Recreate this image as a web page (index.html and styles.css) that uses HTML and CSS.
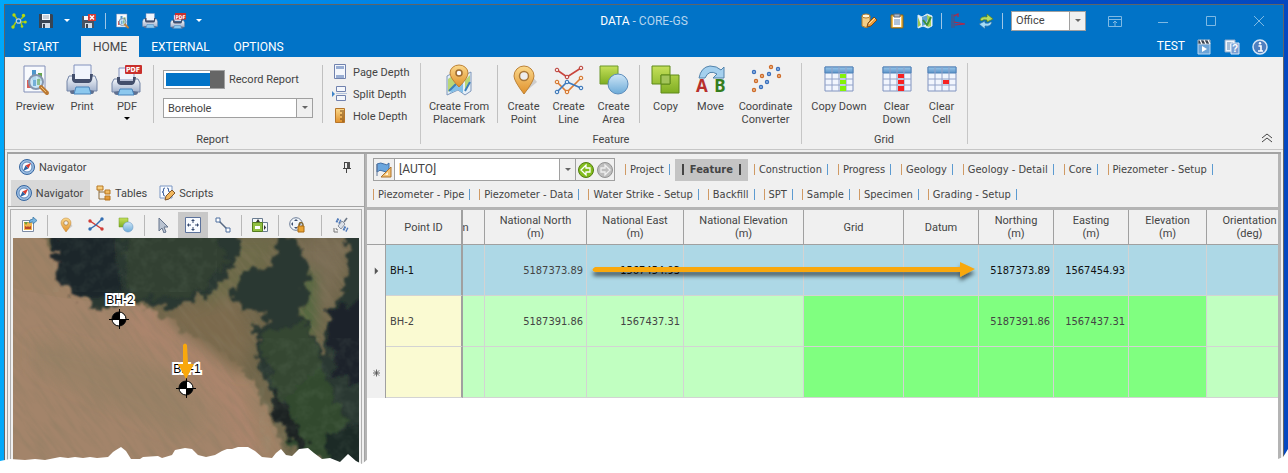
FILE: index.html
```html
<!DOCTYPE html>
<html lang="en">
<head>
<meta charset="utf-8">
<title>DATA - CORE-GS</title>
<link rel="stylesheet" href="styles.css">
</head>
<body>
<svg class="sprite" aria-hidden="true">
  <defs>
    <linearGradient id="gGold" x1="0" y1="0" x2="0" y2="1"><stop offset="0" stop-color="#fbd98c"/><stop offset="1" stop-color="#e0902a"/></linearGradient>
    <linearGradient id="gGreen" x1="0" y1="0" x2="0" y2="1"><stop offset="0" stop-color="#c5e05a"/><stop offset="1" stop-color="#7fae22"/></linearGradient>
    <linearGradient id="gBlue" x1="0" y1="0" x2="0" y2="1"><stop offset="0" stop-color="#cfe6f7"/><stop offset="1" stop-color="#6cabd8"/></linearGradient>
    <linearGradient id="gSteel" x1="0" y1="0" x2="0" y2="1"><stop offset="0" stop-color="#f4f7fb"/><stop offset="1" stop-color="#a3b2cc"/></linearGradient>
    <linearGradient id="gHead" x1="0" y1="0" x2="0" y2="1"><stop offset="0" stop-color="#9cc8ea"/><stop offset="1" stop-color="#5c93c8"/></linearGradient>
    <filter id="ragged" x="-20%" y="-20%" width="140%" height="140%"><feTurbulence type="fractalNoise" baseFrequency=".09" numOctaves="3" seed="4"/><feDisplacementMap in="SourceGraphic" scale="20" xChannelSelector="R" yChannelSelector="G"/><feGaussianBlur stdDeviation="1.2"/></filter>
    <filter id="streaks" x="0" y="0" width="100%" height="100%"><feTurbulence type="fractalNoise" baseFrequency=".03 .2" numOctaves="3" seed="8"/><feColorMatrix values="0 0 0 0 .25  0 0 0 0 .2  0 0 0 0 .12  1.8 0 0 0 -.7"/></filter>
    <filter id="leaves" x="0" y="0" width="100%" height="100%"><feTurbulence type="fractalNoise" baseFrequency=".08" numOctaves="3" seed="21"/><feColorMatrix values="0 0 0 0 .32  0 0 0 0 .42  0 0 0 0 .3  0 1.8 0 0 -.75"/></filter>
    <filter id="soft" x="-30%" y="-30%" width="160%" height="160%"><feGaussianBlur stdDeviation="7"/></filter>
    <filter id="drop" x="-20%" y="-60%" width="140%" height="260%"><feDropShadow dx="0" dy="4" stdDeviation="2" flood-opacity=".6"/></filter>
  </defs>

  <symbol id="preview" viewBox="0 0 32 32">
    <path d="M5 2h21v26H5z" fill="#f8fafd" stroke="#8390b8"/>
    <path d="M8 16h4v8H8z" fill="#d9605a"/><path d="M13 6h4v10h-4z" fill="#4e97cc"/><path d="M19 9h4v8h-4z" fill="#66a54e"/>
    <circle cx="17" cy="18" r="7" fill="#c3e2f5" fill-opacity=".85" stroke="#8595ad" stroke-width="2"/>
    <path d="M14 16h3v6h-3z" fill="#4e97cc" opacity=".7"/><path d="M18 15h3v6h-3z" fill="#66a54e" opacity=".6"/>
    <path d="M22 23l6 6" stroke="#bb7a35" stroke-width="4" stroke-linecap="round"/><path d="M22 23l5 5" stroke="#f0c070" stroke-width="1"/>
  </symbol>
  <symbol id="print" viewBox="0 0 32 32">
    <path d="M8 1h17v15H8z" fill="#f1f5fc" stroke="#8292bd"/>
    <path d="M3 12h4v4h18v-4h4l2 5v10H1V17z" fill="url(#gSteel)" stroke="#7384a6"/>
    <path d="M6 10h3v5h15v-5h3l-1 6q-1 3-3 3H9q-2 0-3-3z" fill="#434f6c"/>
    <path d="M4 27q0 3 2 3h2v-4z" fill="#60708f"/><path d="M28 27q0 3-2 3h-2v-4z" fill="#60708f"/>
    <path d="M10 23h13l2 7H8z" fill="#8cc8ee" stroke="#4782ba"/>
  </symbol>
  <symbol id="pdf" viewBox="0 0 32 32">
    <path d="M8 4h15v12H8z" fill="#f1f5fc" stroke="#8292bd"/>
    <path d="M3 15h4v3h16v-3h4l2 4v9H1v-9z" fill="url(#gSteel)" stroke="#7384a6"/>
    <path d="M6 13h3v4h13v-4h3l-1 5q-1 3-3 3H10q-3 0-4-3z" fill="#434f6c"/>
    <path d="M3 28q0 3 3 3h2v-4z" fill="#60708f"/><path d="M27 28q0 3-3 3h-2v-4z" fill="#60708f"/>
    <path d="M9 25h12l2 6H7z" fill="#8cc8ee" stroke="#4782ba"/>
  </symbol>
  <symbol id="disk" viewBox="0 0 16 16"><path d="M1 1h13l1 1v13H1z" fill="#394452"/><path d="M4 1h8v6H4z" fill="#f3f7fb"/><path d="M5 3h6M5 5h6" stroke="#9ba8b7"/><path d="M4 10h8v5H4z" fill="#d3dce6"/><path d="M5 11h2v4H5z" fill="#394452"/></symbol>
  <symbol id="diskx" viewBox="0 0 16 16"><path d="M1 3h12v12H1z" fill="#4a5361"/><path d="M3 3h5v4H3z" fill="#f3f7fb"/><path d="M4 10h7v5H4z" fill="#d3dce6"/><path d="M5 11h2v4H5z" fill="#394452"/><path d="M7 1h8v7H7z" fill="#d23b36"/><path d="M9 2.500l4 4m0-4l-4 4" stroke="#fff" stroke-width="1.500"/></symbol>
  <symbol id="logo" viewBox="0 0 16 16"><path d="M3 2l3 4M13 3l-3 3M2 14l3-5M14 9h-4M11 13l-1-3" stroke="#a2c617" stroke-width="1.500"/><circle cx="7.500" cy="8" r="2.200" fill="none" stroke="#b7cde4" stroke-width="1.300"/><g fill="#b5d80c"><circle cx="3" cy="2" r="1.700"/><circle cx="12.500" cy="2.500" r="1.700"/><circle cx="2" cy="14" r="1.700"/><circle cx="14.300" cy="9" r="1.500"/><circle cx="11" cy="13.500" r="1.300"/></g></symbol>
  <symbol id="dbedit" viewBox="0 0 16 16"><path d="M1 3v10q4 3 8 0V3z" fill="#f3cf87" stroke="#b27a27"/><ellipse cx="5" cy="3" rx="4" ry="2" fill="#fff5d9" stroke="#b27a27"/><path d="M6 14l1-4 6-6 3 3-6 6z" fill="#f1a03a" stroke="#74491d"/><path d="M8 11l6-6" stroke="#fce2a6"/></symbol>
  <symbol id="clip" viewBox="0 0 16 16"><path d="M2 2h12v13H2z" fill="#f3bf52" stroke="#90620e"/><path d="M4 4h8v10H4z" fill="#fff"/><path d="M5 1h6v3H5z" fill="#aebaca" stroke="#5d6b7d"/><path d="M5 7h6M5 9h6M5 11h6" stroke="#6288b4"/></symbol>
  <symbol id="map" viewBox="0 0 16 16"><path d="M1 2l4 2 5-3 5 2v10l-4 2-5-2-5 2z" fill="#e8f3fb" stroke="#dce9f4"/><path d="M5 4v9l3-1 3-6V2z" fill="#5da3d6"/><path d="M10 2l4 2v9l-3 1z" fill="#a5d055"/><path d="M1 4l3 8-3 2z" fill="#9dc64e"/><path d="M6 7l4 5 4-8" stroke="#3e8f3c" stroke-width="2" fill="none"/></symbol>
  <symbol id="depthlog" viewBox="0 0 16 16"><path d="M2 1v14M4 1v14" stroke="#5a4d79"/><path d="M1 3h3M1 6h3M1 9h3M1 12h3" stroke="#4a5b86"/><path d="M4 3l4-2v3M4 9l11 2-10 1" stroke="#bc2440" stroke-width="1.200" fill="none"/></symbol>
  <symbol id="refresh" viewBox="0 0 16 16"><path d="M2 7q1-4 7-3V1l6 5-6 3V7q-4-1-5 1z" fill="#b6dc63" stroke="#587f17" stroke-width=".7"/><path d="M14 9q-1 5-7 4v3l-6-5 6-3v2q4 1 5-1z" fill="#a5dcf7" stroke="#2b6ea2" stroke-width=".7"/></symbol>
  <symbol id="film" viewBox="0 0 16 16"><path d="M2 5h12v10H2z" fill="#6ba4d8" stroke="#b9d6f0"/><path d="M2 1h12v4H2z" fill="#39424f" stroke="#a6b8c9"/><path d="M4 1l2 4M8 1l2 4M12 1l2 4" stroke="#fff" stroke-width="1.200"/><path d="M6 7l5 3-5 3z" fill="#fff"/></symbol>
  <symbol id="help" viewBox="0 0 16 16"><path d="M1 1h10v12H1z" fill="#eff5fc" stroke="#8ca9c9"/><path d="M3 4h6M3 6h3M3 8h3M3 10h3" stroke="#5b84b2"/><path d="M7 4h8v11H7z" fill="#7a9ed2" stroke="#d9e7f7"/></symbol>
  <symbol id="info" viewBox="0 0 16 16"><circle cx="8" cy="8" r="7" fill="#4e7fc0" stroke="#d5e4f5" stroke-width="1.500"/><path d="M6.500 7H9v5M6 12h5" stroke="#fff" stroke-width="1.600" fill="none"/><circle cx="8" cy="4.300" r="1.200" fill="#fff"/></symbol>

  <symbol id="pagedepth" viewBox="0 0 16 16"><path d="M2.500 .5h11v14h-11z" fill="#f4f7fc" stroke="#7182ae"/><path d="M4 2h8v3H4zM4 11h8v3H4z" fill="#98add3"/></symbol>
  <symbol id="splitdepth" viewBox="0 0 16 16"><path d="M4.500 .5h9v5h-9zM4.500 9.500h9v5h-9z" fill="#f4f7fc" stroke="#7182ae"/><path d="M0 5l3 3-3 3z" fill="#3e83c8"/><path d="M4 7.500h11" stroke="#b3c3dd"/></symbol>
  <symbol id="ruler" viewBox="0 0 16 16"><path d="M3.500 .5h9v14h-9z" fill="url(#gGold)" stroke="#b6752a"/><path d="M12 3H8M12 5h-2M12 7H8M12 9h-2M12 11H8M12 13h-2" stroke="#744413"/></symbol>
  <symbol id="pin" viewBox="0 0 32 32"><path d="M16 29l13-11-5-6z" fill="#b5b5b5" opacity=".6"/><path d="M16 30Q6 17 6 12a10 10 0 0 1 20 0q0 5-10 18z" fill="url(#gGold)" stroke="#bd8236"/><circle cx="16" cy="12" r="4.500" fill="#eee" stroke="#a97838" stroke-width="1.500"/></symbol>
  <symbol id="placemark" viewBox="0 0 32 32"><path d="M4 12l8-4 8 4 8-4v19l-6 4-7-5-11 5z" fill="#e5eff7" stroke="#7e97bb"/><path d="M12 15l8 4v10l-5-3-8 3z" fill="#83bfe7"/><path d="M5 15l4-3 4 9-8 7zM22 16l5-5v6l-5 9z" fill="#b9d676"/><path d="M22 27l5-9M6 27l7-7" stroke="#3b7fb8" stroke-width="2"/><path d="M16 23q-9-9-9-14a9 8 0 0 1 18 0q0 5-9 14z" fill="url(#gGold)" stroke="#bd8236"/><circle cx="16" cy="9" r="3" fill="#fff" stroke="#9c6a32" stroke-width="1.500"/></symbol>
  <symbol id="line" viewBox="0 0 32 32"><g fill="none" stroke-width="1.600"><path d="M4 6l10 7 14-9" stroke="#c9453d"/><path d="M4 18l10 10 14-14" stroke="#dd7d35"/><path d="M4 28l10-10 14 6" stroke="#3a7ac0"/></g><g fill="#f7e4df" stroke="#b93a34"><circle cx="4" cy="6" r="1.800"/><circle cx="14" cy="13" r="1.800"/><circle cx="28" cy="4" r="1.800"/></g><g fill="#fde5c9" stroke="#d16b20"><circle cx="4" cy="18" r="1.800"/><circle cx="14" cy="28" r="1.800"/><circle cx="28" cy="14" r="1.800"/></g><g fill="#d6e8fa" stroke="#2e6db2"><circle cx="4" cy="28" r="1.800"/><circle cx="14" cy="18" r="1.800"/><circle cx="28" cy="24" r="1.800"/></g></symbol>
  <symbol id="area" viewBox="0 0 32 32"><path d="M2 2h18v18H2z" fill="url(#gGreen)" stroke="#6d982b"/><circle cx="20" cy="20" r="10" fill="url(#gBlue)" stroke="#5c8dbc"/></symbol>
  <symbol id="copy" viewBox="0 0 32 32"><path d="M2 2h18v18H2zM11 11h18v18H11z" fill="url(#gGreen)" stroke="#5f8a1a"/><path d="M11 11h9v9h-9z" fill="#a3c45a" stroke="#5f8a1a"/></symbol>
  <symbol id="move" viewBox="0 0 32 32"><path d="M4 14Q6 3 15 2q7 0 11 4l3-3v11H18l4-4q-8-5-12 4z" fill="#a5d0ee" stroke="#5283ac"/></symbol>
  <symbol id="coord" viewBox="0 0 32 32"><g fill="#fff1da" stroke="#ce6b29" stroke-width="1.400"><circle cx="21" cy="3" r="1.500"/><circle cx="12" cy="12" r="1.500"/><circle cx="6" cy="17" r="1.500"/><circle cx="29" cy="12" r="1.500"/><circle cx="4" cy="26" r="1.500"/></g><g fill="#d9eaff" stroke="#386fbc" stroke-width="1.400"><circle cx="4" cy="8" r="1.500"/><circle cx="28" cy="5" r="1.500"/><circle cx="19" cy="10" r="1.500"/><circle cx="17" cy="18" r="1.500"/><circle cx="11" cy="23" r="1.500"/></g></symbol>
  <symbol id="sheet" viewBox="0 0 32 32"><path d="M2 3h28v24H2z" fill="#f1f5fd" stroke="#8093bf"/><path d="M2 3h28v6H2z" fill="url(#gHead)" stroke="#4f82b8"/><path d="M2 15h28M2 21h28M9 3v24M16 3v24M23 3v24" stroke="#92a2c8" fill="none"/></symbol>
  <symbol id="copydown" viewBox="0 0 32 32"><use href="#sheet" width="32" height="32"/><path d="M17 10h6v4h-6zM17 16h6v4h-6zM17 22h6v5h-6z" fill="#84f20a"/></symbol>
  <symbol id="cleardown" viewBox="0 0 32 32"><use href="#sheet" width="32" height="32"/><path d="M17 10h6v4h-6zM17 16h6v4h-6zM17 22h6v5h-6z" fill="#f72222"/></symbol>
  <symbol id="clearcell" viewBox="0 0 32 32"><use href="#sheet" width="32" height="32"/><path d="M17 16h6v4h-6z" fill="#f72222"/></symbol>

  <symbol id="compass" viewBox="0 0 16 16"><circle cx="8" cy="8" r="7.500" fill="#9bbde2" stroke="#35659f"/><circle cx="8" cy="8" r="5" fill="#f8fbff" stroke="#5e87b8"/><path d="M12 4L9.500 9.500 6.500 6.500z" fill="#d83b31"/><path d="M4 12l2.500-5.500 3 3z" fill="#2c62a2"/></symbol>
  <symbol id="tree" viewBox="0 0 16 16"><path d="M4 5v9h6M4 7h6" stroke="#8a6a3a" fill="none"/><path d="M2 1h6v4H2zM10 5h5v4h-5zM10 11h5v4h-5z" fill="url(#gGold)" stroke="#b87720"/></symbol>
  <symbol id="script" viewBox="0 0 16 16"><path d="M1 1h12v12H1z" fill="#fafcff" stroke="#7b96c3"/><path d="M6 3q-2 0-1.500 2T3 7q2 0 1.500 2T6 11M8 3q2 0 1.500 2T11 7" stroke="#3b5f9c" fill="none"/><path d="M6 15l1-4 6-6 3 3-6 6z" fill="#f2b75d" stroke="#7e552b"/></symbol>
  <symbol id="pushpin" viewBox="0 0 16 16"><path d="M5 3.500h6M5.500 3v6M4 9.500h8M7.500 10v4" stroke="#444" fill="none"/><path d="M8 3h3v6H8z" fill="#555"/></symbol>
  <symbol id="image" viewBox="0 0 16 16"><path d="M1.500 3.500h11v11h-11z" fill="#fff" stroke="#7d8ba5"/><path d="M3 5h8v8H3z" fill="#f0b54c"/><path d="M4 9l2 1 1-1 1 1 2-1v3H4z" fill="#b9482a"/><path d="M3 5h4L5 8z" fill="#6c9f3f"/><path d="M8 6q0-4 4-4V0l4 3.500L12 7V5q-2 0-4 1z" fill="#78b4df" stroke="#33719f" stroke-width=".7"/></symbol>
  <symbol id="lines2" viewBox="0 0 16 16"><path d="M2 4l12 8" stroke="#d13c36" stroke-width="1.500"/><path d="M2 12l6-4 6-6" stroke="#326db2" stroke-width="1.500" fill="none"/><g fill="#d13c36"><circle cx="2" cy="4" r="1.700"/><circle cx="14" cy="12" r="1.700"/></g><g fill="#326db2"><circle cx="2" cy="12" r="1.700"/><circle cx="14" cy="2" r="1.700"/></g></symbol>
  <symbol id="cursor" viewBox="0 0 16 16"><path d="M4 1v13l3-3 2 5 2-1-2-5h4z" fill="#b9c3d1" stroke="#66758c"/></symbol>
  <symbol id="pan" viewBox="0 0 16 16"><path d="M.5 .5h15v15H.5z" fill="#f8fbff" stroke="#5d739c"/><path d="M8 3v3M8 10v3M3 8h3M10 8h3" stroke="#34486e"/><path d="M8 2l2 2H6zM8 14l2-2H6zM2 8l2-2v4zM14 8l-2-2v4z" fill="#34486e"/></symbol>
  <symbol id="measure" viewBox="0 0 16 16"><path d="M3 3l10 10" stroke="#566882" stroke-width="1.500"/><path d="M1 1h4v4H1zM11 11h4v4h-4z" fill="#fff" stroke="#4d6e9f"/></symbol>
  <symbol id="layout" viewBox="0 0 16 16"><path d="M.5 1.500h10v4H.5zM10.500 5.500h5v9h-5z" fill="#f5f8fb" stroke="#6a7c90"/><path d="M.5 5.500h10v9H.5z" fill="#90bf41" stroke="#557d1e"/><path d="M3 9h5v3H3z" fill="#fff"/><path d="M12 8l2 2.500-2 2.500z" fill="#333"/><path d="M4 5l2-3 2 3z" fill="#333"/></symbol>
  <symbol id="lock" viewBox="0 0 16 16"><circle cx="7" cy="7" r="6.300" fill="#f2f6fa" stroke="#6c7d97"/><path d="M7 2l2 2H5zM2 7l2-2v4zM12 7l-2-2v4zM7 12l-2-2h4z" fill="#3d5071"/><path d="M10 10V7q2-3 4 0v3" stroke="#83662d" stroke-width="1.300" fill="none"/><path d="M9 9h6v6H9z" fill="#eaa331" stroke="#a96a14"/></symbol>
  <symbol id="satellite" viewBox="0 0 16 16"><path d="M9 4l3 3-4 5-3-3z" fill="#dbe0e8" stroke="#8b93a0"/><path d="M3 4l4 2M4 2l4 2M11 10l4 2M10 12l4 2" stroke="#4f79b8" stroke-width="2" stroke-dasharray="2 1"/><path d="M11 5l3-4" stroke="#6c7684" stroke-width="1.600"/><path d="M1 11v4h4M3 11q0 2 2 2" stroke="#777" fill="none"/></symbol>
  <symbol id="dataset" viewBox="0 0 16 16"><path d="M1 2q4-2 7 0t5-1v8q-3 2-6 0t-6 1z" fill="#6aa6de" stroke="#426fa5"/><path d="M15 5v10H5z" fill="#f3c173" stroke="#ad722a"/><path d="M12 10v3H9z" fill="#fff6de"/><path d="M1 2v12" stroke="#607798"/></symbol>
  <symbol id="prev" viewBox="0 0 16 16"><circle cx="8" cy="8" r="7.500" fill="#83bd1e" stroke="#527d10"/><path d="M3 8l5-5v3h4v4H8v3z" fill="none" stroke="#fff" stroke-width="1.300"/></symbol>
  <symbol id="next" viewBox="0 0 16 16"><circle cx="8" cy="8" r="7.500" fill="#bdbdbd" stroke="#929292"/><path d="M13 8L8 3v3H4v4h4v3z" fill="none" stroke="#eee" stroke-width="1.300"/></symbol>
  <symbol id="caret" viewBox="0 0 8 8"><path d="M1 2h6L4 5z" fill="currentColor"/></symbol>
  <symbol id="displayopts" viewBox="0 0 16 16"><path d="M1.500 3.500h13v10h-13zM1 6.500h14M8 13V8M6 10l2-2 2 2" fill="none" stroke="currentColor"/></symbol>
  <symbol id="min" viewBox="0 0 16 16"><path d="M3 9.500h10" stroke="currentColor"/></symbol>
  <symbol id="max" viewBox="0 0 16 16"><path d="M3.500 3.500h9v9h-9z" stroke="currentColor" fill="none"/></symbol>
  <symbol id="close" viewBox="0 0 16 16"><path d="M3 3l10 10M13 3L3 13" stroke="currentColor"/></symbol>
</svg>

<div class="desktop">
  <div class="window">
    <header class="titlebar">
      <div class="quick">
        <svg class="i16 logo"><use href="#logo"/></svg>
        <button class="qb" aria-label="Save"><svg class="i16"><use href="#disk"/></svg></button>
        <button class="qc" aria-label="Save options"><svg class="i8"><use href="#caret"/></svg></button>
        <button class="qb save-close" aria-label="Save and close"><svg class="i16"><use href="#diskx"/></svg></button>
        <span class="qsep"></span>
        <button class="qb" aria-label="Preview"><svg class="i16"><use href="#preview"/></svg></button>
        <button class="qb" aria-label="Print"><svg class="i16"><use href="#print"/></svg></button>
        <button class="qb" aria-label="Export to file"><svg class="i16" viewBox="0 0 32 32"><use href="#pdf" width="32" height="32"/><path d="M10 0h22v13H10z" fill="#c9302c"/><text x="21" y="11" class="pdf-mark small">PDF</text></svg></button>
        <button class="qc" aria-label="Customize toolbar"><svg class="i8"><use href="#caret"/></svg></button>
      </div>
      <h1 class="title">DATA <span>- CORE-GS</span></h1>
      <div class="quick quick-right">
        <button class="qb" aria-label="Edit database"><svg class="i16"><use href="#dbedit"/></svg></button>
        <button class="qb" aria-label="Clipboard"><svg class="i16"><use href="#clip"/></svg></button>
        <button class="qb" aria-label="Map"><svg class="i16"><use href="#map"/></svg></button>
        <span class="qsep"></span>
        <button class="qb" aria-label="Depth log"><svg class="i16"><use href="#depthlog"/></svg></button>
        <button class="qb" aria-label="Refresh"><svg class="i16"><use href="#refresh"/></svg></button>
        <span class="qsep"></span>
        <div class="combo combo-office"><select aria-label="Location"><option>Office</option></select><span class="drop"><svg class="i8"><use href="#caret"/></svg></span></div>
        <div class="winbtns">
          <button aria-label="Ribbon display options"><svg class="i16"><use href="#displayopts"/></svg></button>
          <button aria-label="Minimize"><svg class="i16"><use href="#min"/></svg></button>
          <button aria-label="Maximize"><svg class="i16"><use href="#max"/></svg></button>
          <button aria-label="Close"><svg class="i16"><use href="#close"/></svg></button>
        </div>
      </div>
    </header>

    <nav class="menu">
      <button class="menu-tab start">START</button>
      <button class="menu-tab active">HOME</button>
      <button class="menu-tab external">EXTERNAL</button>
      <button class="menu-tab options">OPTIONS</button>
      <div class="menu-right">
        <span>TEST</span>
        <button class="qb" aria-label="Videos"><svg class="i16"><use href="#film"/></svg></button>
        <button class="qb" aria-label="Help"><svg class="i16" viewBox="0 0 16 16"><use href="#help" width="16" height="16"/><text x="11" y="13" class="glyph-mark">?</text></svg></button>
        <button class="qb" aria-label="About"><svg class="i16"><use href="#info"/></svg></button>
      </div>
    </nav>

    <section class="ribbon">
      <div class="group group-report">
        <div class="tools">
          <button class="rb w46"><svg class="i32"><use href="#preview"/></svg>Preview</button>
          <button class="rb w48"><svg class="i32"><use href="#print"/></svg>Print</button>
          <button class="rb w42"><svg class="i32" viewBox="0 0 32 32"><use href="#pdf" width="32" height="32"/><rect x="14" y="1" width="17" height="9" rx="1" fill="#c9302c"/><text x="22" y="8" class="pdf-mark">PDF</text></svg>PDF<svg class="i8 black"><use href="#caret"/></svg></button>
          <span class="rsep"></span>
          <div class="fields">
            <div class="switch-row"><input type="checkbox" class="switch" id="rec" checked><label for="rec">Record Report</label></div>
            <div class="combo combo-report"><select aria-label="Report"><option>Borehole</option></select><span class="drop"><svg class="i8"><use href="#caret"/></svg></span></div>
          </div>
          <span class="rsep"></span>
          <div class="stack">
            <button><svg class="i16"><use href="#pagedepth"/></svg>Page Depth</button>
            <button><svg class="i16"><use href="#splitdepth"/></svg>Split Depth</button>
            <button><svg class="i16"><use href="#ruler"/></svg>Hole Depth</button>
          </div>
        </div>
        <div class="caption">Report</div>
      </div>
      <div class="group">
        <div class="tools">
          <button class="rb w76"><svg class="i32"><use href="#placemark"/></svg>Create From<br>Placemark</button>
          <span class="rsep tight"></span>
          <button class="rb w45"><svg class="i32"><use href="#pin"/></svg>Create<br>Point</button>
          <button class="rb w45"><svg class="i32"><use href="#line"/></svg>Create<br>Line</button>
          <button class="rb w45"><svg class="i32"><use href="#area"/></svg>Create<br>Area</button>
          <span class="rsep mid"></span>
          <button class="rb w45"><svg class="i32"><use href="#copy"/></svg>Copy</button>
          <button class="rb w45"><svg class="i32" viewBox="0 0 32 32"><use href="#move" width="32" height="32"/><text x="7" y="28" class="move-a">A</text><text x="25" y="28" class="move-b">B</text></svg>Move</button>
          <button class="rb w65"><svg class="i32"><use href="#coord"/></svg>Coordinate<br>Converter</button>
        </div>
        <div class="caption">Feature</div>
      </div>
      <div class="group group-grid">
        <div class="tools">
          <button class="rb w70"><svg class="i32"><use href="#copydown"/></svg>Copy Down</button>
          <button class="rb w45"><svg class="i32"><use href="#cleardown"/></svg>Clear<br>Down</button>
          <button class="rb w45"><svg class="i32"><use href="#clearcell"/></svg>Clear<br>Cell</button>
        </div>
        <div class="caption">Grid</div>
      </div>
      <button class="collapse" aria-label="Collapse ribbon"><svg viewBox="0 0 12 10"><path d="M1 5l5-4 5 4M1 9l5-4 5 4" fill="none" stroke="#444"/></svg></button>
    </section>

    <main class="body">
      <aside class="dock">
        <div class="dock-head"><svg class="i16"><use href="#compass"/></svg><span>Navigator</span><button aria-label="Auto hide"><svg class="i16"><use href="#pushpin"/></svg></button></div>
        <div class="dock-tabs">
          <button class="active"><svg class="i16"><use href="#compass"/></svg>Navigator</button>
          <button><svg class="i16"><use href="#tree"/></svg>Tables</button>
          <button><svg class="i16"><use href="#script"/></svg>Scripts</button>
        </div>
        <div class="dock-box">
          <div class="mapbar">
            <button aria-label="Export image"><svg class="i16"><use href="#image"/></svg></button><span></span>
            <button aria-label="Point"><svg class="i16"><use href="#pin"/></svg></button>
            <button aria-label="Line"><svg class="i16"><use href="#lines2"/></svg></button>
            <button aria-label="Area"><svg class="i16"><use href="#area"/></svg></button><span></span>
            <button aria-label="Select"><svg class="i16"><use href="#cursor"/></svg></button>
            <button class="active" aria-label="Pan"><svg class="i16"><use href="#pan"/></svg></button>
            <button aria-label="Measure"><svg class="i16"><use href="#measure"/></svg></button><span></span>
            <button aria-label="Layout"><svg class="i16"><use href="#layout"/></svg></button><span></span>
            <button aria-label="Lock extents"><svg class="i16"><use href="#lock"/></svg></button><span class="far"></span>
            <button aria-label="Satellite"><svg class="i16"><use href="#satellite"/></svg></button>
          </div>
          <svg class="aerial" role="img" aria-label="Aerial map">
            <rect width="100%" height="100%" fill="#9f8266"/>
            <path d="M0 50Q90 70 140 66Q230 110 250 240H0z" fill="#a3846a"/>
            <g filter="url(#soft)"><path d="M20 100l130 30 40 50-20 20L20 130z" fill="#8d7c5f" opacity=".4"/><path d="M120 62q60 30 110 80l22 80-24 0-24-60-90-70z" fill="#b3866e" opacity=".5"/></g>
            <path d="M20-10h420v270H280Q268 190 244 150Q211 106 171 94Q146 72 118 66L30 0z" fill="#6f664b" filter="url(#ragged)"/>
            <g filter="url(#soft)"><path d="M150 78l70-30 20 50-10 40z" fill="#7b6a4d"/><path d="M205 0h60l-20 50-60 20z" fill="#6d6a4a"/><path d="M290 0h50l-30 80-20 50z" fill="#7a6d54"/><path d="M288 30l16 5v60l-20 10z" fill="#50683e"/></g>
            <g transform="rotate(52)"><rect x="-20" y="-300" width="480" height="520" filter="url(#streaks)" opacity=".42"/></g>
            <g filter="url(#ragged)" fill="#2b3830">
              <path d="M36-14h188l2 34-24 32-40 18-40-6-34 6-26-16-10-22z"/>
              <path d="M266-10l16 16 10 8 4 30-4 22-12 22-14 2-20-18-18-2-10-14 16-24 26-4z"/>
              <path d="M330-14h90v70h-66l-14 8-14-12 12-22z"/>
              <path d="M242 86l46-8 24 40 4-44 24-30h70v210h-66l-8-36-26 4-16-20-20-10-14-34-14-30z"/>
            </g>
            <g filter="url(#ragged)"><path d="M110-4h96l8 30-34 32-62 2z" fill="#323f30"/><path d="M272 136l34-10 26 60-18 36-38-12z" fill="#31482f"/><path d="M245 96l50-10 14 40-40 40z" fill="#364633"/><path d="M42-4h62l2 60-40 8-22-24z" fill="#1f262a"/><path d="M316 76l50-30v110l-44-20z" fill="#1c2229"/><path d="M262 150l32 58-6 10-28-42z" fill="#1b2424"/><path d="M312 200l50-22v66h-46z" fill="#1f2928"/></g>
            <svg x="40" width="164" height="54"><rect width="100%" height="100%" filter="url(#leaves)" opacity=".14"/></svg>
            <svg x="246" y="100" width="100%" height="160"><rect width="100%" height="100%" filter="url(#leaves)" opacity=".15"/></svg>
            <g transform="translate(106 81)"><circle r="7" fill="#fff" stroke="#000"/><path d="M0 0H-7A7 7 0 0 1 0-7zM0 0H7A7 7 0 0 1 0 7z" fill="#000"/><path d="M-10 .5H10M.5-10V10" stroke="#000"/></g>
            <g transform="translate(173 150)"><circle r="7" fill="#fff" stroke="#000"/><path d="M0 0H-7A7 7 0 0 1 0-7zM0 0H7A7 7 0 0 1 0 7z" fill="#000"/><path d="M-10 .5H10M.5-10V10" stroke="#000"/></g>
            <text x="107" y="66" class="mark">BH-2</text>
            <text x="174" y="135" class="mark">BH-1</text>
            <path d="M170 107q2-3 4 0l1 19h6l-8 15-8-15h5z" fill="#f9a80c"/>
          </svg>
        </div>
      </aside>

      <section class="pane">
        <div class="views">
          <div class="row">
            <div class="picker">
              <button aria-label="Dataset"><svg class="i16"><use href="#dataset"/></svg></button>
              <div class="combo"><select aria-label="View"><option>[AUTO]</option></select><span class="drop"><svg class="i8"><use href="#caret"/></svg></span></div>
              <button aria-label="Previous"><svg class="i16"><use href="#prev"/></svg></button><button aria-label="Next"><svg class="i16"><use href="#next"/></svg></button>
            </div>
            <button class="vt">Project</button><button class="vt active">Feature</button><button class="vt">Construction</button><button class="vt">Progress</button><button class="vt">Geology</button><button class="vt">Geology - Detail</button><button class="vt">Core</button><button class="vt">Piezometer - Setup</button>
          </div>
          <div class="row row2">
            <button class="vt">Piezometer - Pipe</button><button class="vt">Piezometer - Data</button><button class="vt">Water Strike - Setup</button><button class="vt">Backfill</button><button class="vt">SPT</button><button class="vt">Sample</button><button class="vt">Specimen</button><button class="vt">Grading - Setup</button>
          </div>
        </div>
        <div class="gridwrap">
          <table class="grid">
            <colgroup><col class="c-ind"><col class="c-id"><col class="c-m"><col class="c-nn"><col class="c-ne"><col class="c-nv"><col class="c-grid"><col class="c-std"><col class="c-std"><col class="c-std"><col class="c-el"><col class="c-or"></colgroup>
            <thead><tr><th></th><th class="fix">Point ID</th><th class="cut">m</th><th>National North<br>(m)</th><th>National East<br>(m)</th><th>National Elevation<br>(m)</th><th>Grid</th><th>Datum</th><th>Northing<br>(m)</th><th>Easting<br>(m)</th><th>Elevation<br>(m)</th><th>Orientation<br>(deg)</th></tr></thead>
            <tbody>
              <tr class="sel"><th><svg class="ind" viewBox="0 0 8 8"><path d="M2 0l4 4-4 4z" fill="#555"/></svg></th><td class="id fix">BH-1</td><td></td><td class="dim">5187373.89</td><td>1567454.93</td><td></td><td></td><td></td><td>5187373.89</td><td>1567454.93</td><td></td><td></td></tr>
              <tr><th></th><td class="id fix">BH-2</td><td></td><td>5187391.86</td><td>1567437.31</td><td></td><td class="hi"></td><td class="hi"></td><td class="hi">5187391.86</td><td class="hi">1567437.31</td><td class="hi"></td><td></td></tr>
              <tr><th><svg class="ind" viewBox="0 0 8 8"><path d="M4 0v8M0 4h8M1 1l6 6M7 1L1 7" stroke="#555"/></svg></th><td class="id fix"></td><td></td><td></td><td></td><td></td><td class="hi"></td><td class="hi"></td><td class="hi"></td><td class="hi"></td><td class="hi"></td><td></td></tr>
            </tbody>
          </table>
          <svg class="arrow" viewBox="0 0 400 30" aria-hidden="true"><path d="M12 7h365V2l15 7-15 8v-5H12q-5-2 0-5z" fill="#f9a80c" filter="url(#drop)"/></svg>
        </div>
      </section>
    </main>
  </div>
  <svg class="torn" viewBox="0 0 1288 30" preserveAspectRatio="none" aria-hidden="true"><path d="M0 18L10 16 25 17 35 16 45 17 60 14 68 15 75 14 83 15 90 14 97 15 108 14 113 9 116 7 121 4 126 8 131 16 140 16 143 14 158 13 162 15 172 12 175 7 185 5 192 6 198 12 206 14 215 12 222 8 227 6 232 6 238 4 248 4 255 8 262 14 272 15 276 10 281 6 286 12 292 13 299 6 308 5 314 10 322 16 330 15 340 19 348 11 356 18 362 21 368 16H1278L1283 14 1285 11 1288 6V30H0z" fill="#fff"/></svg>
</div>
</body>
</html>
```

FILE: styles.css
```css
* { box-sizing: border-box; }
body { margin: 0; font-family: Roboto, "Liberation Sans", sans-serif; font-size: 11px; line-height: 13px; color: #444; }
button, select, input { font: inherit; color: inherit; margin: 0; padding: 0; border: 0; background: none; }
button { display: flex; align-items: center; justify-content: center; white-space: nowrap; }
h1 { margin: 0; }
svg { display: block; flex: none; }
.sprite { position: absolute; width: 0; height: 0; }
.i8 { width: 8px; height: 8px; }
.i16 { width: 16px; height: 16px; }
.i32 { width: 32px; height: 32px; }
.pdf-mark { font: bold 7px "DejaVu Sans Condensed", sans-serif; fill: #fff; text-anchor: middle; }
.pdf-mark.small { font-size: 10px; }
.glyph-mark { font: bold 10px "Liberation Sans", sans-serif; fill: #fff; text-anchor: middle; }
.move-a, .move-b { font: bold 17px "Noto Sans", sans-serif; text-anchor: middle; }
.move-a { fill: #b8302c; }
.move-b { fill: #357d1d; }

.desktop { position: relative; min-height: 100vh; display: flex; flex-direction: column; padding: 4px 4px 0; overflow: hidden; background: linear-gradient(90deg, #00a8fa 0, #0093ee 15%, #0078e0 40%, #0052cc 70%, #0448c0 100%); }
.window { flex: 1; display: flex; flex-direction: column; min-width: 0; border: 1px solid #5f6468; border-bottom: 0; background: #f0f0f0; }

.titlebar { display: grid; grid-template-columns: 1fr auto 1fr; height: 31px; background: #0173c7; color: #fff; }
.quick { display: flex; align-items: center; }
.logo { margin: 0 5px 0 6px; }
.qb { width: 28px; height: 21px; }
.qc { width: 14px; height: 21px; }
.save-close { margin-left: 1px; }
.qsep { width: 1px; height: 16px; margin: 0 2px; background: #9fc6e6; }
.title { align-self: center; font-size: 12px; font-weight: 400; line-height: 16px; }
.title span { color: #b5d5ee; }
.quick-right { justify-content: flex-end; }
.winbtns { display: flex; color: #7fb9e3; margin-left: 5px; }
.winbtns button { width: 48px; height: 31px; }

.combo { display: grid; grid-template-columns: 1fr 16px; height: 20px; border: 1px solid #a0a0a0; background: #fff; color: #444; }
.combo select { grid-area: 1 / 1 / 2 / 3; appearance: none; padding-left: 4px; }
.drop { grid-area: 1 / 2; display: flex; align-items: center; justify-content: center; border-left: 1px solid #a0a0a0; background: #f0f0f0; pointer-events: none; color: #666; }
.combo-office { width: 75px; margin-left: 6px; }
.combo-report { width: 150px; }

.menu { display: flex; height: 21px; background: #0173c7; color: #fff; font-size: 12px; }
.menu-tab { padding-top: 2px; }
.menu-tab.start { width: 72px; }
.menu-tab.active { width: 58px; margin-left: 4px; background: #f0f0f0; color: #444; }
.menu-tab.external { width: 83px; }
.menu-tab.options { width: 73px; }
.menu-right { display: flex; align-items: center; margin-left: auto; padding-right: 9px; }
.menu-right span { margin-right: 5px; }

.ribbon { display: flex; height: 93px; padding-top: 6px; border-bottom: 1px solid #c6c6c6; }
.group { display: flex; flex-direction: column; height: 81px; border-right: 1px solid #c6c6c6; }
.group-report { padding-left: 7px; width: 416px; }
.group-report .caption { margin-left: -7px; }
.tools { display: flex; }
.group-grid { padding: 0 3px 0 2px; }
.caption { margin-top: auto; text-align: center; line-height: 14px; height: 11px; }
.rb { flex-direction: column; justify-content: flex-start; height: 64px; text-align: center; padding-top: 1px; }
.rb .i32 { margin-bottom: 4px; }
.rb .i8 { margin-top: 2px; }
.black { color: #000; }
.w42 { width: 42px; }
.w45 { width: 45px; }
.w46 { width: 46px; }
.w48 { width: 48px; }
.w65 { width: 65px; margin-right: 3px; }
.w70 { width: 70px; }
.w76 { width: 76px; }
.rsep { width: 1px; height: 58px; margin: 2px 9px 0 5px; background: #c0c0c0; }
.rsep.tight { margin: 2px 3px 0 0; }
.rsep.mid { margin: 2px 3px 0; }
.fields { display: flex; flex-direction: column; gap: 9px; padding-top: 7px; margin-right: 4px; }
.switch-row { display: flex; align-items: center; gap: 4px; height: 19px; }
.switch { appearance: none; width: 62px; height: 19px; border: 1px solid #a0a0a0; background: linear-gradient(#666, #666) right / 15px 100% no-repeat border-box, linear-gradient(#0173c7, #0173c7) 2px 2px / 46px 13px no-repeat, #fff; }
.fields + .rsep { margin-right: 10px; }
.stack { display: flex; flex-direction: column; height: 62px; justify-content: space-between; }
.stack button { height: 18px; gap: 5px; justify-content: flex-start; }
.stack .i16 { margin-left: -1px; }
.collapse { align-self: flex-end; margin: 0 10px 6px auto; }
.collapse svg { width: 12px; height: 10px; }

.body { flex: 1; display: flex; margin: 2px 2px 0; border-top: 2px solid #a3a3a3; min-width: 0; }
.dock { width: 358px; flex: none; display: flex; flex-direction: column; border: solid #a3a3a3; border-width: 0 1px; }
.dock-head { display: flex; align-items: center; height: 26px; padding: 0 9px 0 11px; gap: 4px; }
.dock-head button { margin-left: auto; }
.dock-tabs { display: flex; height: 27px; padding-left: 3px; border-bottom: 1px solid #a3a3a3; }
.dock-tabs button { gap: 4px; padding: 0 7px 0 5px; }
.dock-tabs button.active { width: 79px; background: #d8d8d8; }
.dock-box { flex: 1; display: flex; flex-direction: column; margin: 2px 2px 0; padding: 0 2px; border: 1px solid #b0b0b0; border-bottom: 0; }
.mapbar { display: flex; height: 28px; align-items: center; padding: 2px 0 0 1px; }
.mapbar button { width: 30px; height: 26px; }
.mapbar button.active { background: #c8c8c8; }
.mapbar span { width: 1px; height: 21px; margin: 0 3px; background: #b8b8b8; }
.mapbar span.far { margin: 0 4px 0 9px; }
.aerial { width: 100%; height: 236px; flex: 1; }
.mark { font: 12px "Liberation Sans", sans-serif; text-anchor: middle; fill: #000; stroke: #fff; stroke-width: 4px; paint-order: stroke; }

.pane { flex: 1; min-width: 0; display: flex; flex-direction: column; border: solid #b4b4b4; border-width: 0 3px 0 2px; background: #fff; }
.views { background: #f0f0f0; padding: 4px 6px 0; height: 53px; font-family: "DejaVu Sans Condensed", sans-serif; }
.row { display: flex; align-items: center; height: 23px; }
.row2 { margin-top: 2px; margin-left: -5px; }
.picker { display: grid; grid-template-columns: 20px 182px 19px 19px; width: 242px; height: 23px; border: 1px solid #a0a0a0; margin-right: 5px; flex: none; font-family: Roboto, sans-serif; }
.picker .combo { height: 21px; border-width: 0 1px; }
.picker select { font-size: 12px; }
.vt { height: 22px; padding: 0 5px; flex: none; }
.row2 .vt { padding-right: 4px; }
.vt::before, .vt::after { content: ""; width: 1px; height: 11px; background: #d09a64; }
.vt::before { margin-right: 4px; }
.vt::after { margin-left: 5px; background: #5c9bd1; }
.vt.active { background: #c4c4c4; font-weight: 700; padding: 0 7px; margin-right: 1px; }
.vt.active::before, .vt.active::after { background: #444; width: 2px; }
.vt.active::before { margin-right: 6px; }
.vt.active::after { margin-left: 6px; }

.gridwrap { position: relative; overflow: hidden; border-top: 3px solid #b4b4b4; }
.grid { table-layout: fixed; width: 924px; border-collapse: separate; border-spacing: 0; font-family: "DejaVu Sans Condensed", sans-serif; }
.c-ind { width: 19px; }
.c-id { width: 77px; }
.c-m { width: 22px; }
.c-nn { width: 102px; }
.c-ne { width: 97px; }
.c-nv { width: 120px; }
.c-grid { width: 100px; }
.c-std { width: 75px; }
.c-el { width: 78px; }
.c-or { width: 86px; }
.grid th, .grid td { padding: 0 2px; overflow: hidden; white-space: nowrap; }
.grid thead th { height: 35px; background: #f0f0f0; border: solid #a0a0a0; border-width: 0 1px 1px 0; font-family: Roboto, sans-serif; font-weight: 400; text-align: center; }
.grid td { height: 51px; padding-right: 3px; text-align: right; background: #c1ffc1; border: solid #d3d3d3; border-width: 0 1px 1px 0; }
.grid thead .cut { text-align: left; padding: 0; text-indent: -4px; }
.grid tbody th { background: #f0f0f0; border-right: 1px solid #a0a0a0; }
.grid .id { text-align: left; padding-left: 4px; background: #fafad2; }
.grid .fix { border-right: 2px solid #a0a0a0; }
.grid .sel td { background: #add8e6; color: #111; }
.grid .sel .dim { color: #444; }
.grid .hi { background: #80ff80; }
.ind { width: 7px; height: 8px; margin: 0 auto; }
.arrow { position: absolute; left: 216px; top: 50px; width: 400px; height: 30px; }
.torn { position: absolute; left: 0; bottom: 0; width: 100%; height: 30px; }
```
